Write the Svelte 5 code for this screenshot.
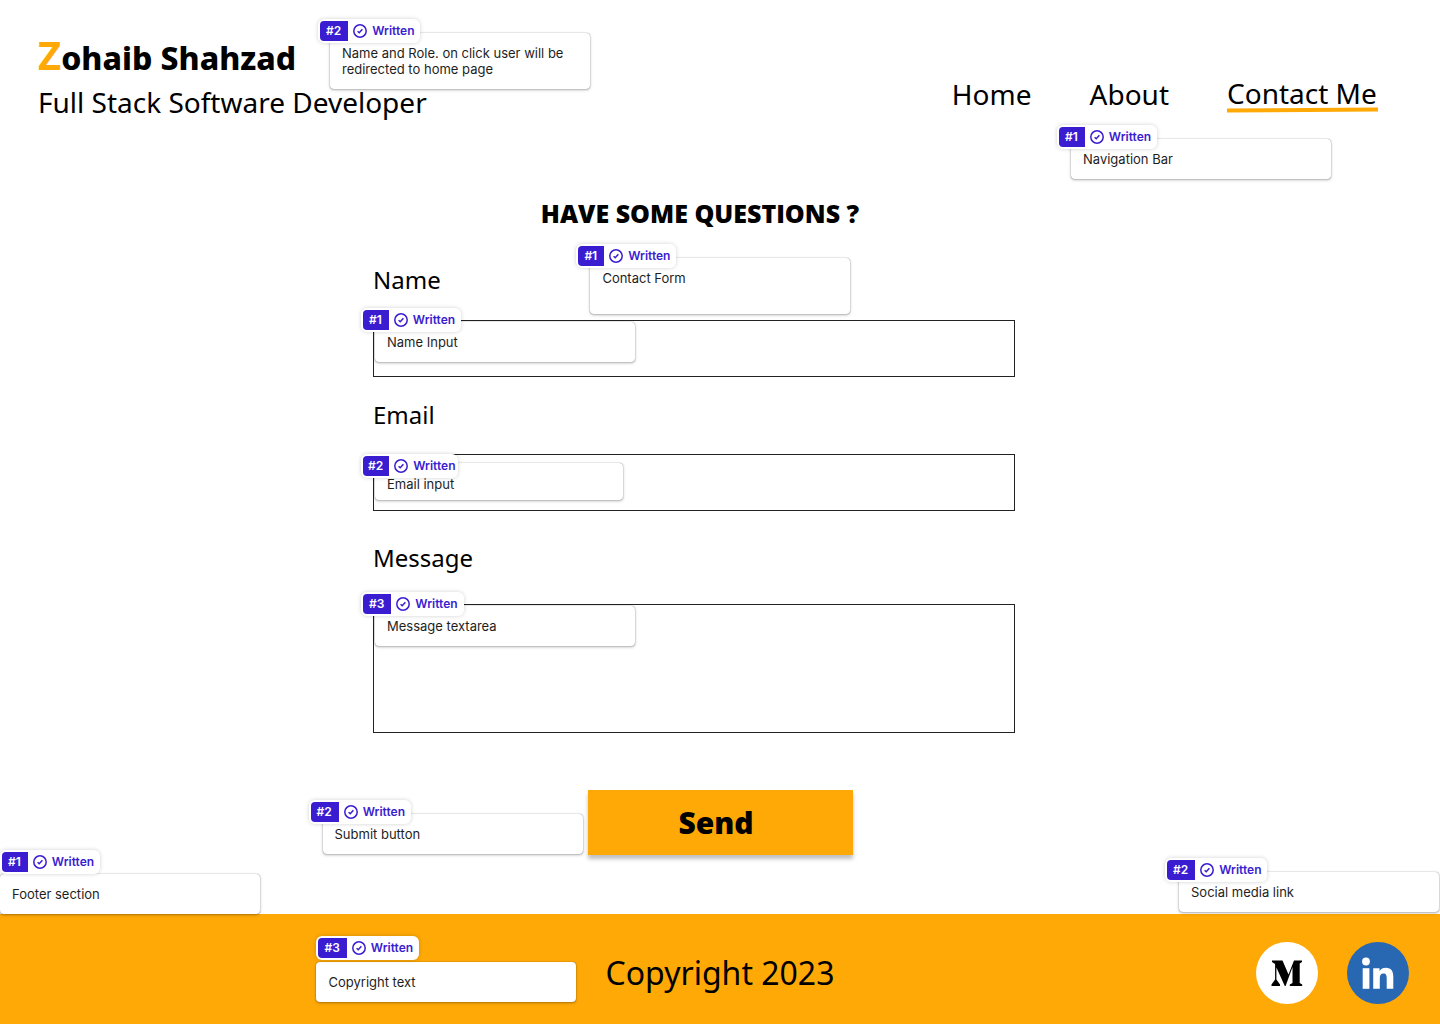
<script>
  let name = $state('');
  let email = $state('');
  let message = $state('');
</script>

{#snippet note(number, text, place)}
  <aside class="note {place}">
    <div class="tag">
      <span class="number">#{number}</span>
      <svg class="check" viewBox="0 0 14 14" aria-hidden="true">
        <circle cx="7" cy="7" r="6.2" />
        <path d="M4.6 7.3 6.2 8.8 9.4 5.2" />
      </svg>
      <span class="status">Written</span>
    </div>
    <p>{text}</p>
  </aside>
{/snippet}

<div class="page">
  <header>
    <div class="brand">
      <a class="home" href="#home">
        <span class="name"><span class="initial">Z</span>ohaib Shahzad</span>
        <span class="role">Full Stack Software Developer</span>
      </a>
      {@render note(2, 'Name and Role. on click user will be redirected to home page', 'at-brand')}
    </div>
    <nav>
      <a href="#home">Home</a>
      <a href="#about">About</a>
      <a class="current" href="#contact" aria-current="page">
        Contact Me
        <svg class="underline" viewBox="0 0 151 6" preserveAspectRatio="none" aria-hidden="true">
          <path d="M0 3.5 151 2.5" />
        </svg>
      </a>
      {@render note(1, 'Navigation Bar', 'at-nav')}
    </nav>
  </header>

  <main>
    <h1>HAVE SOME QUESTIONS ?</h1>
    <form onsubmit={(e) => e.preventDefault()}>
      {@render note(1, 'Contact Form', 'at-form')}
      <div class="field first">
        <label for="name">Name</label>
        <div class="control">
          <input id="name" type="text" bind:value={name} />
          {@render note(1, 'Name Input', 'at-name')}
        </div>
      </div>
      <div class="field">
        <label for="email">Email</label>
        <div class="control">
          <input id="email" type="email" bind:value={email} />
          {@render note(2, 'Email input', 'at-email')}
        </div>
      </div>
      <div class="field last">
        <label for="message">Message</label>
        <div class="control">
          <textarea id="message" bind:value={message}></textarea>
          {@render note(3, 'Message textarea', 'at-message')}
        </div>
      </div>
      <div class="submit">
        <button type="submit">Send</button>
        {@render note(2, 'Submit button', 'at-submit')}
      </div>
    </form>
  </main>

  <footer>
    {@render note(1, 'Footer section', 'at-footer')}
    <div class="copyright">
      Copyright 2023
      {@render note(3, 'Copyright text', 'at-copyright')}
    </div>
    <div class="social">
      <a href="#medium" aria-label="Medium">
        <svg viewBox="0 0 62 62" aria-hidden="true">
          <circle cx="31" cy="31" r="31" fill="#fff" />
          <path d="M16 18.500h10.500l6 14 5.500-14H46v1.500l-2.300 1.600v19.300l2.500 1.600V44H33.800v-1.500l2.700-1.600V25L29.600 44h-.8L20.400 25.500v12l3.600 5V44H15.500v-1.500l3.600-5V22L16 20z" />
        </svg>
      </a>
      <a href="#linkedin" aria-label="LinkedIn">
        <svg viewBox="0 0 62 62" aria-hidden="true">
          <circle cx="31" cy="31" r="31" fill="#2867b2" />
          <g fill="#fff">
            <circle cx="19" cy="19.500" r="3.900" />
            <path d="M15.700 26.200h6.700v20.600h-6.700z" />
            <path d="M26.200 26.200h6.300v2.900c1.300-2.200 3.600-3.400 6.300-3.400 5.800 0 7.500 3.700 7.500 9.300v11.800h-6.600V36.300c0-2.800-.5-4.900-3.300-4.900-2.700 0-3.600 2-3.600 4.900v10.500h-6.600z" />
          </g>
        </svg>
      </a>
      {@render note(2, 'Social media link', 'at-social')}
    </div>
  </footer>
</div>

<style>
  :global(body) {
    margin: 0;
    background: #fff;
  }

  .page {
    display: flex;
    flex-direction: column;
    min-height: 100vh;
    overflow: hidden;
    color: #000;
    font-family: 'Noto Sans', sans-serif;
  }

  a {
    color: inherit;
    text-decoration: none;
  }

  header {
    display: flex;
    justify-content: space-between;
    padding: 29px 62px 0 38px;
  }

  .brand,
  nav,
  form,
  .control,
  .submit,
  .copyright,
  .social,
  footer {
    position: relative;
  }

  .home,
  .name,
  .role {
    display: block;
  }

  .name {
    font-size: 32px;
    font-weight: 800;
    line-height: 52px;
  }

  .initial {
    color: #ffa907;
    font-size: 40px;
    font-weight: 700;
  }

  .role {
    font-size: 28px;
    line-height: 36px;
  }

  nav {
    display: flex;
    align-items: flex-start;
    gap: 58px;
    padding-top: 46px;
    font-size: 28px;
    line-height: 38px;
  }

  .current {
    display: flex;
    flex-direction: column;
    line-height: 36px;
  }

  .underline {
    width: 100%;
    height: 6px;
    margin-top: -4px;
  }

  .underline path {
    fill: none;
    stroke: #ffa907;
    stroke-width: 4;
  }

  main {
    flex: 1;
    padding-bottom: 59px;
  }

  h1 {
    margin: 75px 40px 0 0;
    font-family: 'Open Sans', sans-serif;
    font-size: 25px;
    font-weight: 800;
    line-height: 36px;
    text-align: center;
  }

  form {
    display: grid;
    grid-template-columns: 373fr 642fr 425fr;
    padding-top: 32px;
  }

  .field {
    grid-column: 2;
    display: flex;
    flex-direction: column;
    gap: 23px;
    margin-bottom: 21px;
  }

  .field.first {
    gap: 24px;
  }

  .field.last {
    gap: 30px;
    margin: 9px 0 57px;
  }

  label {
    font-size: 24px;
    line-height: 33px;
  }

  .control {
    display: flex;
  }

  input,
  textarea {
    box-sizing: border-box;
    width: 100%;
    height: 57px;
    margin: 0;
    padding: 12px;
    border: 1px solid #222;
    border-radius: 0;
    background: #fff;
    font: 20px 'Noto Sans', sans-serif;
    resize: none;
  }

  textarea {
    height: 129px;
  }

  .submit {
    grid-column: 1 / -1;
    justify-self: center;
  }

  button {
    display: block;
    width: 265px;
    height: 65px;
    padding: 0 8px 0 0;
    border: 0;
    background: #ffa907;
    box-shadow: 0 4px 4px rgba(0, 0, 0, 0.25);
    color: #000;
    font: 800 30px 'Open Sans', sans-serif;
  }

  footer {
    display: grid;
    grid-template-columns: 1fr auto 1fr;
    align-items: center;
    height: 110px;
    padding: 0 31px;
    background: #ffa907;
  }

  .copyright {
    grid-column: 2;
    padding-top: 8px;
    font-size: 32px;
    line-height: 44px;
  }

  .social {
    justify-self: end;
    display: flex;
    gap: 29px;
    padding-top: 8px;
  }

  .social > a svg {
    display: block;
    width: 62px;
    height: 62px;
  }

  /* Annotation cards float over the page next to what they describe. */
  .note {
    position: absolute;
    z-index: 1;
    box-sizing: border-box;
    width: 260px;
    min-height: 40px;
    padding: 12px;
    border-radius: 4px;
    background: #fff;
    box-shadow: 0 0 1px rgba(0, 0, 0, 0.5), 0 1px 3px rgba(0, 0, 0, 0.3);
    color: #1e1e1e;
    font-family: Inter, sans-serif;
    font-size: 13px;
    line-height: 16px;
  }

  .note p {
    margin: 0;
  }

  .tag {
    position: absolute;
    top: -14px;
    left: -14px;
    display: flex;
    align-items: center;
    gap: 5px;
    padding: 2px 6px 2px 2px;
    border-radius: 6px;
    background: #fff;
    box-shadow: 0 0 4px rgba(0, 0, 0, 0.18);
    color: #3a1dd1;
    font-size: 12px;
    font-weight: 600;
    line-height: 20px;
  }

  .number {
    padding: 0 7px 0 6px;
    border-radius: 4px 0 0 4px;
    background: #3a1dd1;
    color: #fff;
  }

  .check {
    width: 14px;
    height: 14px;
    fill: none;
    stroke: currentColor;
    stroke-width: 1.5;
  }

  .at-brand {
    top: 4px;
    left: 292px;
  }

  .at-brand .tag {
    left: -12px;
  }

  .at-nav {
    top: 110px;
    right: 47px;
  }

  .at-form {
    top: 27px;
    left: 41%;
    min-height: 56px;
  }

  .at-name,
  .at-message {
    top: 2px;
    left: 2px;
  }

  .at-email {
    top: 9px;
    left: 2px;
    width: 248px;
    min-height: 37px;
    padding: 13px 12px 8px;
  }

  .at-email .tag {
    top: -9px;
    padding-right: 3px;
  }

  .at-email .number {
    padding: 0 6px 0 5px;
  }

  .at-submit {
    top: 24px;
    right: 270px;
  }

  .at-footer {
    top: -40px;
    left: 0;
  }

  .at-footer .tag {
    top: -24px;
    left: 0;
  }

  .at-copyright {
    top: 19px;
    right: 258px;
  }

  .at-copyright .tag {
    top: -26px;
    left: 0;
  }

  .at-social {
    right: -30px;
    bottom: 92px;
  }
</style>
